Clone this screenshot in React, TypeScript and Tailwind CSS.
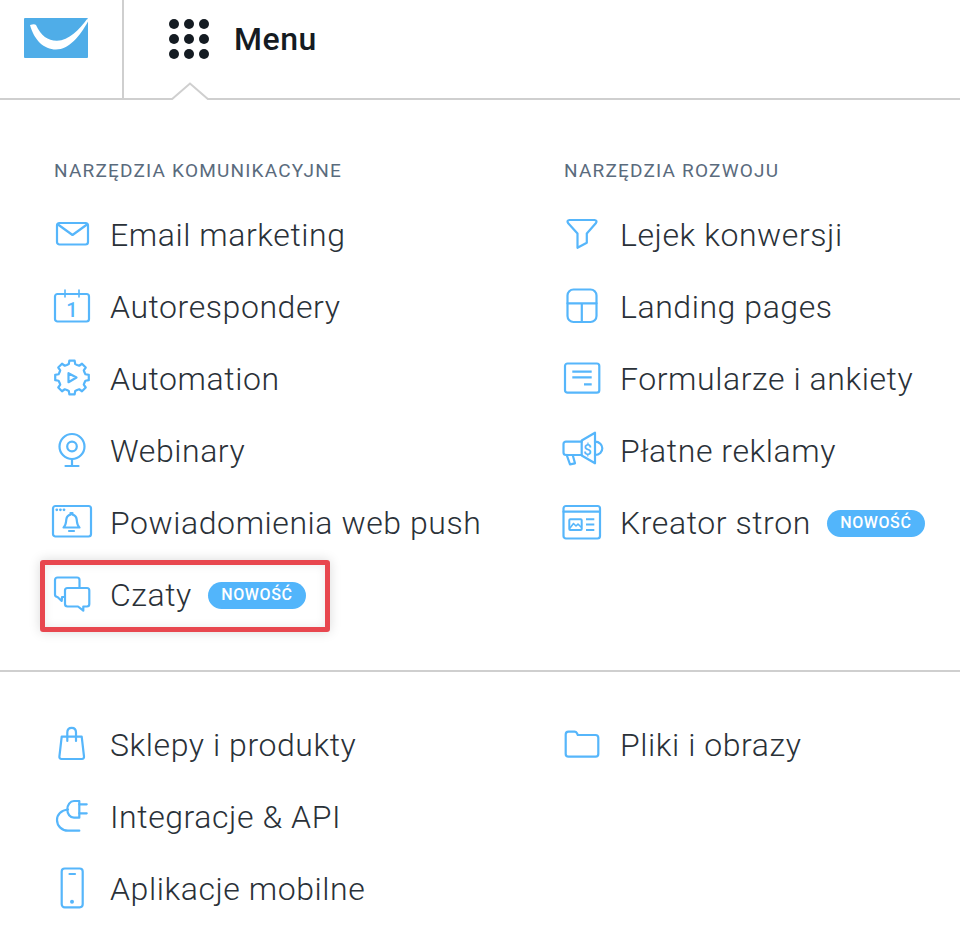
import * as React from "react"

const gearPath = () => {
  const cx = 22
  const cy = 20.5
  const teeth = 8
  const pts: string[] = []
  for (let i = 0; i < teeth; i++) {
    const a = (i / teeth) * Math.PI * 2 - Math.PI / 2
    const step = (Math.PI * 2) / teeth
    const spots: [number, number][] = [
      [13.5, -0.5 * step],
      [13.8, -0.3 * step],
      [17, -0.2 * step],
      [17, 0.2 * step],
      [13.8, 0.3 * step],
    ]
    spots.forEach(([r, d]) => {
      const x = cx + r * Math.cos(a + d)
      const y = cy + r * Math.sin(a + d)
      pts.push(`${x.toFixed(2)} ${y.toFixed(2)}`)
    })
  }
  return "M" + pts.join("L") + "Z"
}

const Icon = ({ children }: { children: React.ReactNode }) => (
  <svg
    width="44"
    height="44"
    viewBox="0 0 44 44"
    fill="none"
    stroke="#56b6fb"
    strokeWidth="2.2"
    strokeLinecap="round"
    strokeLinejoin="round"
    className="shrink-0 overflow-visible"
  >
    {children}
  </svg>
)

const icons: Record<string, React.ReactNode> = {
  email: (
    <>
      <rect x="7" y="10" width="31" height="21.5" rx="2.5" />
      <path d="M8 11.5 L22.5 22 L37 11.5" />
    </>
  ),
  calendar: (
    <>
      <rect x="5" y="9" width="34" height="27.5" rx="2.5" />
      <path d="M15 5 V12 M29 5 V12" strokeWidth="1.6" />
      <text x="22" y="31.5" textAnchor="middle" fontSize="20" fontWeight="500" fontFamily="Roboto, sans-serif" fill="#56b6fb" stroke="none">1</text>
    </>
  ),
  gear: (
    <>
      <path d={gearPath()} />
      <path d="M18.5 16.2 L26.5 20.5 L18.5 25.2 Z" />
    </>
  ),
  webcam: (
    <>
      <circle cx="22" cy="17.5" r="12.5" />
      <circle cx="22" cy="17.5" r="4.8" />
      <path d="M22 30 V37 M15.5 37 H28.5" />
    </>
  ),
  push: (
    <>
      <rect x="3" y="5" width="38" height="30.5" rx="2.5" />
      <path d="M13.5 26.5 C16 24.5 16 21.5 16.3 18.5 C16.7 15.5 18.5 14 20.5 13.6 V12 H22.5 V13.6 C24.5 14 26.3 15.5 26.7 18.5 C27 21.5 27 24.5 29.5 26.5 Z" />
      <path d="M19 30 H24" />
      <circle cx="6.8" cy="8.8" r="1.4" fill="#56b6fb" stroke="none" />
      <circle cx="10.4" cy="8.8" r="1.4" fill="#56b6fb" stroke="none" />
      <circle cx="14" cy="8.8" r="1.4" fill="#56b6fb" stroke="none" />
    </>
  ),
  chat: (
    <>
      <path d="M15 24 H12 L11.7 28 L7.5 24 C5.8 24 5 23 5 21.5 V7 C5 5.5 6 4.5 7.5 4.5 H27 C28.5 4.5 29.5 5.5 29.5 7 V14.5" />
      <path d="M17.5 15 H37 C38.5 15 39.3 16 39.3 17.5 V31 C39.3 32.5 38.5 33.5 37 33.5 H33.3 V37.7 L28 33.5 H17.5 C16 33.5 15 32.5 15 31 V17.5 C15 16 16 15 17.5 15 Z" />
    </>
  ),
  funnel: (
    <path d="M9.5 7 H34.5 C36.5 7 37 8.5 36 10 L26.8 20.5 V29.8 L17.5 34.8 V20.5 L8 10 C7 8.5 7.5 7 9.5 7 Z" />
  ),
  landing: (
    <>
      <rect x="7.5" y="4.5" width="29" height="32.5" rx="6" />
      <path d="M7.5 18.3 H36.5 M21.8 18.3 V37" />
    </>
  ),
  form: (
    <>
      <rect x="5" y="6.5" width="34.3" height="29.2" rx="2.5" />
      <path d="M12.3 14.7 H31.7 M12.3 20.3 H31.7 M24 27.3 H31.7" strokeLinecap="butt" />
    </>
  ),
  megaphone: (
    <>
      <path d="M21.7 11.5 L35 3.7 V34.3 L21.7 26.5 Z" />
      <path d="M21.7 12.7 H6 C4.5 12.7 3.5 13.7 3.5 15 V23.5 C3.5 25 4.5 26 6 26 H21.7" />
      <path d="M6.7 26 L10 35.3 L15 34.3 L12.7 26" />
      <path d="M35 12.7 C39.5 12.7 42.3 16 42.3 19.3 C42.3 22.7 39.5 26 35 26" />
      <text x="27.5" y="25.5" textAnchor="middle" fontSize="15" fontWeight="500" fontFamily="Roboto, sans-serif" fill="#56b6fb" stroke="none">$</text>
    </>
  ),
  builder: (
    <>
      <rect x="3.5" y="5" width="36.5" height="32.5" rx="2.5" />
      <path d="M3.5 10.7 H40" />
      <rect x="9.3" y="18.3" width="12.4" height="10.7" rx="1" strokeWidth="2" />
      <path d="M10 27 L13.5 22.5 L16 25 L18 23 L21 26" strokeWidth="1.6" />
      <path d="M26 18.3 H34.3 M26 23.5 H34.3 M26 29 H34.3" strokeWidth="2" strokeLinecap="butt" />
    </>
  ),
  bag: (
    <>
      <path d="M11.7 13.7 H31.7 L34 33.5 C34.2 35 33.3 36 32 36 H11.5 C10 36 9.2 35 9.4 33.5 Z" />
      <path d="M17.3 18 V9.5 C17.3 6.5 19 4.8 21.7 4.8 C24.4 4.8 26 6.5 26 9.5 V18" />
    </>
  ),
  plug: (
    <>
      <path d="M29.3 6 V22.7 H24 C20 22.7 17.3 19 17.3 14.5 C17.3 10 20 6 24 6 Z" />
      <path d="M29.3 9.3 H36.7 M29.3 18.3 H36.7" />
      <path d="M18 14.5 C11 15 7 20 7 25 C7 31 12 35.7 18 35.7 H29.3" />
    </>
  ),
  phone: (
    <>
      <rect x="11.7" y="1.5" width="21" height="38.8" rx="3" />
      <path d="M19.5 7 H25" />
      <circle cx="22" cy="34.7" r="2" fill="#56b6fb" stroke="none" />
    </>
  ),
  folder: (
    <path d="M8.5 8.7 H14.5 C15.8 8.7 16.5 9.3 17 10.3 L17.8 12 H35.5 C37.2 12 38.3 13 38.3 14.8 V31 C38.3 32.7 37.2 33.7 35.5 33.7 H8.5 C6.8 33.7 5.7 32.7 5.7 31 V11.5 C5.7 9.8 6.8 8.7 8.5 8.7 Z" />
  ),
}

const Badge = () => (
  <span className="ml-[17px] flex h-[27px] w-[98px] -translate-x-[1px] items-center justify-center rounded-full bg-[#52b5fb] text-[16px] font-medium tracking-[0.6px] text-white">
    NOWOŚĆ
  </span>
)

const Row = ({ icon, label, badge, marked }: { icon: string; label: string; badge?: boolean; marked?: boolean }) => (
  <div className="relative flex h-[72px] items-center">
    <span className="flex w-[60px] shrink-0 items-center">
      <Icon>{icons[icon]}</Icon>
    </span>
    <span className="whitespace-nowrap text-[32px] font-light leading-none tracking-[0.57px] text-[#2a3138]">{label}</span>
    {badge && <Badge />}
    {marked && (
      <span className="absolute -left-[10px] top-[1px] h-[72px] w-[290px] rounded-[3px] border-[5px] border-[#e8474f] shadow-[0_0_12px_rgba(0,0,0,0.15),inset_0_0_10px_rgba(0,0,0,0.08)]" />
    )}
  </div>
)

const Heading = ({ children }: { children: React.ReactNode }) => (
  <h3 className="flex h-[28px] items-center pl-[4px] text-[19px] font-normal tracking-[1.2px] text-[#5a6b7d]">{children}</h3>
)

export default function App() {
  return (
    <div className="h-[928px] w-[960px] overflow-hidden bg-white font-['Roboto',sans-serif]">
      {/* Top bar */}
      <header className="relative flex h-[100px] border-b-2 border-[#cfcfcf]">
        <div className="w-[124px] border-r-2 border-[#cfcfcf] pl-[24px] pt-[18px]">
          <svg width="64" height="40" viewBox="0 0 64 40">
            <path d="M1 0 H63 Q64 0 64 1 V39 Q64 40 63 40 H1 Q0 40 0 39 V1 Q0 0 1 0 Z" fill="#4fade8" />
            <path d="M6 7 C9 6 11 6 12 7 C17 18 24 22.8 33 22.7 C45 22.5 55 12 63.5 0.5 C64 1 64 2 64 3.5 C56 18 45 31.5 32 31.5 C20 31.5 10 22 6 7 Z" fill="#fff" />
          </svg>
        </div>
        <div className="flex items-start pl-[45px] pt-[19px]">
          <div className="grid w-[40px] grid-cols-3 gap-x-[5px] gap-y-[5px]">
            {Array.from({ length: 9 }).map((_, i) => (
              <span key={i} className="h-[10px] w-[10px] rounded-full bg-[#141b22]" />
            ))}
          </div>
          <span className="ml-[25px] mt-[1px] text-[32px] font-medium leading-[38px] tracking-[0.5px] text-[#141b22]">Menu</span>
        </div>
        <svg className="absolute left-[170px] top-[82px]" width="40" height="18" viewBox="0 0 40 18">
          <path d="M1 18 L20 1.5 L39 18" fill="#fff" stroke="#cfcfcf" strokeWidth="2" />
        </svg>
      </header>

      {/* Tools */}
      <section className="flex h-[572px] border-b-2 border-[#cfcfcf] pl-[50px] pt-[57px]">
        <div className="w-[510px]">
          <Heading>NARZĘDZIA KOMUNIKACYJNE</Heading>
          <div className="mt-[14px]">
            <Row icon="email" label="Email marketing" />
            <Row icon="calendar" label="Autorespondery" />
            <Row icon="gear" label="Automation" />
            <Row icon="webcam" label="Webinary" />
            <Row icon="push" label="Powiadomienia web push" />
            <Row icon="chat" label="Czaty" badge marked />
          </div>
        </div>
        <div>
          <Heading>NARZĘDZIA ROZWOJU</Heading>
          <div className="mt-[14px]">
            <Row icon="funnel" label="Lejek konwersji" />
            <Row icon="landing" label="Landing pages" />
            <Row icon="form" label="Formularze i ankiety" />
            <Row icon="megaphone" label="Płatne reklamy" />
            <Row icon="builder" label="Kreator stron" badge />
          </div>
        </div>
      </section>

      {/* Other */}
      <section className="flex pl-[50px] pt-[37px]">
        <div className="w-[510px]">
          <Row icon="bag" label="Sklepy i produkty" />
          <Row icon="plug" label="Integracje & API" />
          <Row icon="phone" label="Aplikacje mobilne" />
        </div>
        <div>
          <Row icon="folder" label="Pliki i obrazy" />
        </div>
      </section>
    </div>
  )
}
